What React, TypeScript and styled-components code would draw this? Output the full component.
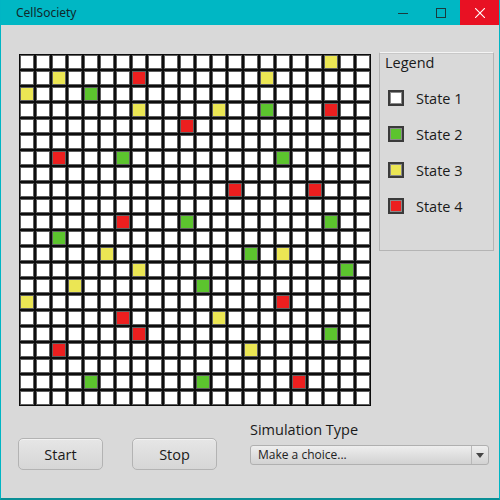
import React from "react";
import styled, { createGlobalStyle } from "styled-components";

const GlobalStyle = createGlobalStyle`
  html, body { margin: 0; padding: 0; background: #d9d9d9; }
  * { box-sizing: border-box; }
`;

const COLORS: Record<number, string> = {
  0: "#ffffff",
  1: "#5cc42e",
  2: "#ebe654",
  3: "#ec1f1f",
};

const SIZE = 22;
// [row, col, state]
const CELLS: [number, number, number][] = [
  [0, 19, 2],
  [1, 2, 2], [1, 7, 3], [1, 15, 2],
  [2, 0, 2], [2, 4, 1],
  [3, 7, 2], [3, 12, 2], [3, 15, 1], [3, 19, 3],
  [4, 10, 3],
  [6, 2, 3], [6, 6, 1], [6, 16, 1],
  [8, 13, 3], [8, 18, 3],
  [10, 6, 3], [10, 10, 1], [10, 19, 1],
  [11, 2, 1],
  [12, 5, 2], [12, 14, 1], [12, 16, 2],
  [13, 7, 2], [13, 20, 1],
  [14, 3, 2], [14, 11, 1],
  [15, 0, 2], [15, 16, 3],
  [16, 6, 3], [16, 12, 2],
  [17, 7, 3], [17, 19, 1],
  [18, 2, 3], [18, 14, 2],
  [20, 4, 1], [20, 11, 1], [20, 17, 3],
];

const stateAt = (() => {
  const m = new Map<string, number>();
  CELLS.forEach(([r, c, s]) => m.set(`${r}-${c}`, s));
  return (r: number, c: number) => m.get(`${r}-${c}`) ?? 0;
})();

const Window = styled.div`
  width: 500px;
  height: 500px;
  display: flex;
  flex-direction: column;
  background: #d9d9d9;
  border-left: 1px solid #00b5c4;
  border-right: 1px solid #00b5c4;
  border-bottom: 2px solid #0a8f96;
  font-family: "Open Sans", "Noto Sans", sans-serif;
  color: #1a1a1a;
  overflow: hidden;
`;

const TitleBar = styled.div`
  height: 25px;
  flex: none;
  display: flex;
  align-items: center;
  background: #00b7c4;
  margin: 0 -1px;
`;

const Title = styled.div`
  flex: 1;
  padding-left: 16px;
  font-size: 12px;
  color: #10282b;
  font-family: "Noto Sans", "Open Sans", sans-serif;
`;

const WinButton = styled.div<{ $close?: boolean }>`
  width: ${(p) => (p.$close ? 40 : 38)}px;
  height: 25px;
  display: flex;
  align-items: center;
  justify-content: center;
  background: ${(p) => (p.$close ? "#e81123" : "transparent")};
`;

const Content = styled.div`
  flex: 1;
  display: flex;
  flex-direction: column;
  padding: 27px 0 0 18px;
`;

const TopRow = styled.div`
  display: flex;
  align-items: flex-start;
  gap: 8px;
`;

const Grid = styled.div`
  margin-top: 2px;
  display: grid;
  grid-template-columns: repeat(${SIZE}, 16px);
  grid-auto-rows: 16px;
`;

const Cell = styled.div<{ $color: string }>`
  width: 16px;
  height: 16px;
  background: ${(p) => p.$color};
  border: 1px solid #0c0c0c;
  box-shadow: inset 0 0 0 1px #5e5e5e;
`;

const Legend = styled.div`
  width: 115px;
  height: 199px;
  border: 1px solid #b4b4b4;
  border-top-color: #f4f4f4;
  box-shadow: inset 0 1px 0 #c8c8c8;
  padding: 0 0 0 5px;
`;

const LegendTitle = styled.div`
  font-size: 14.5px;
  line-height: 19px;
`;

const LegendList = styled.div`
  display: flex;
  flex-direction: column;
  gap: 16px;
  margin-top: 16px;
  padding-left: 3px;
`;

const LegendItem = styled.div`
  display: flex;
  align-items: center;
  gap: 12px;
  height: 20px;
  font-size: 14.5px;
`;

const Swatch = styled.div<{ $color: string }>`
  width: 16px;
  height: 16px;
  background: ${(p) => p.$color};
  border: 2px solid #3a3a3a;
  box-shadow: inset 0 0 0 1px #8a8a8a;
`;

const BottomRow = styled.div`
  display: flex;
  align-items: flex-start;
  margin: 14px 0 0 -1px;
`;

const Button = styled.button`
  margin-top: 18px;
  width: 85px;
  height: 32px;
  border: 1px solid #b3b3b3;
  border-radius: 5px;
  background: linear-gradient(#e6e6e6, #d6d6d6);
  box-shadow: inset 0 1px 0 #f2f2f2;
  font-family: "Open Sans", "Noto Sans", sans-serif;
  font-size: 14.5px;
  color: #1a1a1a;
  padding: 0;
  & + & {
    margin-left: 29px;
  }
`;

const SimColumn = styled.div`
  margin-left: 33px;
  display: flex;
  flex-direction: column;
  gap: 5px;
`;

const SimLabel = styled.div`
  font-size: 14.5px;
  line-height: 20px;
`;

const Select = styled.div`
  width: 239px;
  height: 20px;
  display: flex;
  border: 1px solid #b0b0b0;
  border-radius: 3px;
  background: linear-gradient(#eeeeee, #d2d2d2);
`;

const SelectText = styled.div`
  flex: 1;
  padding-left: 7px;
  font-size: 12px;
  line-height: 18px;
  color: #222;
`;

const SelectArrow = styled.div`
  width: 17px;
  display: flex;
  align-items: center;
  justify-content: center;
  border-left: 1px solid #b8b8b8;
`;

export default function App() {
  const cells = [];
  for (let r = 0; r < SIZE; r++) {
    for (let c = 0; c < SIZE; c++) {
      cells.push(<Cell key={`${r}-${c}`} $color={COLORS[stateAt(r, c)]} />);
    }
  }
  return (
    <>
      <GlobalStyle />
      <Window>
        <TitleBar>
          <Title>CellSociety</Title>
          <WinButton>
            <svg width="10" height="10" viewBox="0 0 10 10">
              <path d="M0 5.5h10" stroke="#1a3a3d" strokeWidth="1" />
            </svg>
          </WinButton>
          <WinButton>
            <svg width="10" height="10" viewBox="0 0 10 10">
              <rect x="0.5" y="0.5" width="9" height="9" fill="none" stroke="#1a3a3d" strokeWidth="1" />
            </svg>
          </WinButton>
          <WinButton $close>
            <svg width="10" height="10" viewBox="0 0 10 10">
              <path d="M0 0L10 10M10 0L0 10" stroke="#ffffff" strokeWidth="1.1" />
            </svg>
          </WinButton>
        </TitleBar>
        <Content>
          <TopRow>
            <Grid>{cells}</Grid>
            <Legend>
              <LegendTitle>Legend</LegendTitle>
              <LegendList>
                {[0, 1, 2, 3].map((s) => (
                  <LegendItem key={s}>
                    <Swatch $color={COLORS[s]} />
                    <span>State {s + 1}</span>
                  </LegendItem>
                ))}
              </LegendList>
            </Legend>
          </TopRow>
          <BottomRow>
            <Button>Start</Button>
            <Button>Stop</Button>
            <SimColumn>
              <SimLabel>Simulation Type</SimLabel>
              <Select>
                <SelectText>Make a choice...</SelectText>
                <SelectArrow>
                  <svg width="8" height="5" viewBox="0 0 8 5">
                    <path d="M0 0h8L4 5z" fill="#444" />
                  </svg>
                </SelectArrow>
              </Select>
            </SimColumn>
          </BottomRow>
        </Content>
      </Window>
    </>
  );
}
